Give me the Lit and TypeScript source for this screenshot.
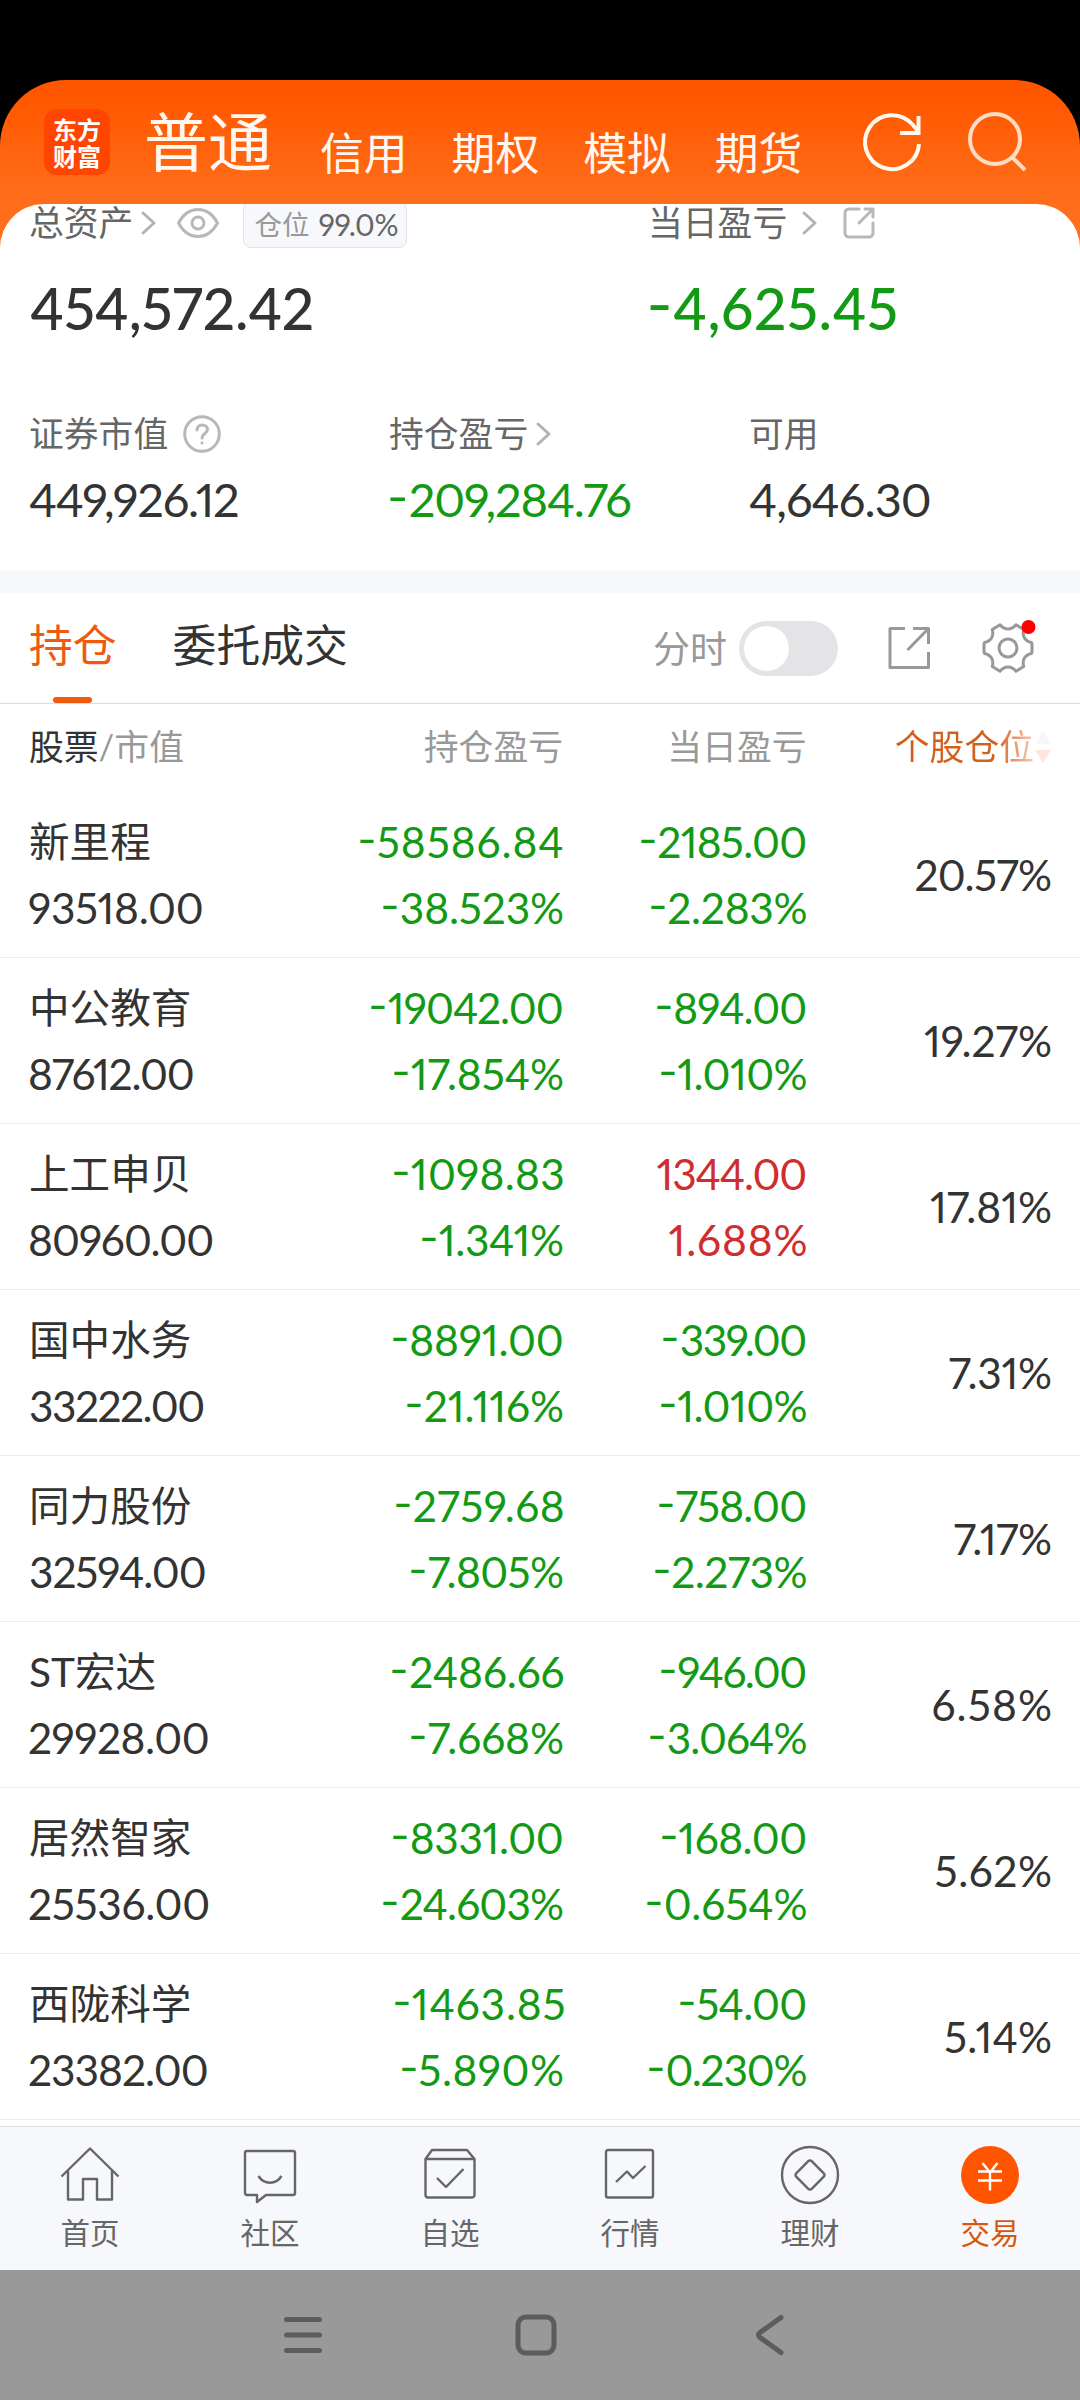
import { LitElement, html, css, svg, nothing } from "lit";
import { customElement, property, query } from "lit/decorators.js";
import { classMap } from "lit/directives/class-map.js";

const ctx = document.createElement("canvas").getContext("2d")!;

/* A figure whose ink is tracked to fill exactly `w` pixels. */
@customElement("num-text")
export class NumText extends LitElement {
  @property() value = "";
  @property({ type: Number }) w = 100;
  @property({ type: Number }) size = 42.5;
  @property({ type: Number }) weight = 400;
  @query(".n") private box!: HTMLElement;
  @query(".d") private figures!: HTMLElement;
  static styles = css`
    :host { display: block; white-space: nowrap; }
    .n { display: inline-block; font-kerning: normal; font-variant-numeric: proportional-nums; }
    .m { display: inline-block; width: 0.42em; letter-spacing: 0; text-align: left; transform: translate(-0.05em, -0.09em) scaleX(1.25); transform-origin: 0 50%; }
  `;
  protected updated() {
    const box = this.box;
    box.style.fontSize = `${this.size}px`;
    box.style.fontWeight = `${this.weight}`;
    box.style.letterSpacing = "0";
    const minus = this.value.startsWith("-");
    const digits = minus ? this.value.slice(1) : this.value;
    const natural = this.figures.getBoundingClientRect().width;
    ctx.font = `${this.weight} ${this.size}px Lato`;
    const left = digits[0] === "1" ? 2 : -ctx.measureText(digits[0]).actualBoundingBoxLeft;
    const tail = ctx.measureText(digits[digits.length - 1]);
    const right = tail.width - tail.actualBoundingBoxRight;
    const lead = minus ? 0.42 * this.size + left : 0;
    const ls = (this.w - lead - (natural - left - right)) / (digits.length - 1);
    box.style.letterSpacing = `${ls}px`;
    box.style.marginLeft = `${minus ? 0 : -left}px`;
    box.style.marginRight = `${-ls - right}px`;
  }
  render() {
    const minus = this.value.startsWith("-");
    return html`<span class="n">${minus ? html`<span class="m">-</span>` : nothing}<span class="d">${minus ? this.value.slice(1) : this.value}</span></span>`;
  }
}

type Fig = [text: string, width: number];
interface Holding { name: string; value: Fig; pl: Fig; plPct: Fig; day: Fig; dayPct: Fig; share: Fig; }

const HOLDINGS: Holding[] = [
  { name: "新里程", value: ["93518.00", 173], pl: ["-58586.84", 204], plPct: ["-38.523%", 181], day: ["-2185.00", 167], dayPct: ["-2.283%", 157], share: ["20.57%", 134.5] },
  { name: "中公教育", value: ["87612.00", 164], pl: ["-19042.00", 193], plPct: ["-17.854%", 170], day: ["-894.00", 151], dayPct: ["-1.010%", 147], share: ["19.27%", 125] },
  { name: "上工申贝", value: ["80960.00", 183.5], pl: ["-1098.83", 170], plPct: ["-1.341%", 142], day: ["1344.00", 148], dayPct: ["1.688%", 136], share: ["17.81%", 119] },
  { name: "国中水务", value: ["33222.00", 174.5], pl: ["-8891.00", 171.5], plPct: ["-21.116%", 157], day: ["-339.00", 144.5], dayPct: ["-1.010%", 147], share: ["7.31%", 100.5] },
  { name: "同力股份", value: ["32594.00", 176], pl: ["-2759.68", 168], plPct: ["-7.805%", 153], day: ["-758.00", 149], dayPct: ["-2.273%", 153], share: ["7.17%", 95.5] },
  { name: "ST宏达", value: ["29928.00", 179], pl: ["-2486.66", 171.5], plPct: ["-7.668%", 153], day: ["-946.00", 147], dayPct: ["-3.064%", 157.5], share: ["6.58%", 117.5] },
  { name: "居然智家", value: ["25536.00", 179.5], pl: ["-8331.00", 171], plPct: ["-24.603%", 181], day: ["-168.00", 146], dayPct: ["-0.654%", 160.5], share: ["5.62%", 114.5] },
  { name: "西陇科学", value: ["23382.00", 178], pl: ["-1463.85", 169], plPct: ["-5.890%", 162.5], day: ["-54.00", 128], dayPct: ["-0.230%", 159], share: ["5.14%", 105] },
];

const NAV = [
  { label: "首页", icon: svg`<path d="M1.500 31.500 30 3.500 58.500 31.500M8 26V54.500H23V34H37V54.500H52V26"/>` },
  { label: "社区", icon: svg`<path d="M7 6H53a2 2 0 0 1 2 2V48a2 2 0 0 1-2 2H26L17 57V50H7a2 2 0 0 1-2-2V8a2 2 0 0 1 2-2ZM18.500 31C24 40 36 40 41.500 31"/>` },
  { label: "自选", icon: svg`<path d="M5.500 14 12 5H47L54.500 14V50a2.500 2.500 0 0 1-2.500 2.500H8A2.500 2.500 0 0 1 5.500 50ZM6 14H54M17 33 26 42 43.500 24"/>` },
  { label: "行情", icon: svg`<rect x="6" y="5" width="47" height="47.500" rx="2"/><path d="M16 37 27 26.500 33 33 45.500 21"/>` },
  { label: "理财", icon: svg`<circle cx="30" cy="30" r="28"/><path d="M28.300 16.200a2.400 2.400 0 0 1 3.400 0L43.800 28.300a2.400 2.400 0 0 1 0 3.400L31.700 43.800a2.400 2.400 0 0 1-3.400 0L16.200 31.700a2.400 2.400 0 0 1 0-3.400Z"/>` },
  { label: "交易", icon: svg`<circle cx="30" cy="30" r="29" fill="#ff5500" stroke="none"/><path stroke="#fff" d="M22.500 18 30 27.500 37.500 18M30 27.500V45.500M18 26.500H42M18 35.500H42"/>` },
];

/* Six-toothed settings cog in a 52px box. */
const COG = "M18 2.700C22.500 8.300 29.500 8.300 34 2.700L41.700 7.500C40 13.500 42.500 19 49.500 20.500Q50 21 50 22V30Q50 31 49.500 31.500C42.500 33 40 38.500 41.700 44.500L34 49.300C29.500 43.700 22.500 43.700 18 49.300L10.300 44.500C12 38.500 9.500 33 2.500 31.500Q2 31 2 30V22Q2 21 2.500 20.500C9.500 19 12 13.500 10.300 7.500Z";

const chevron = html`<svg class="chev" width="16" height="24" viewBox="0 0 16 24"><path d="M2 2 13 12 2 22"/></svg>`;
const fig = (f: Fig) => html`<num-text .value=${f[0]} .w=${f[1]}></num-text>`;

@customElement("app-root")
export class AppRoot extends LitElement {
  static styles = css`
    :host {
      display: flex; flex-direction: column; width: 1080px; height: 2400px;
      background: #000; overflow: hidden; color: #333;
      font-family: Lato, "Noto Sans CJK SC", sans-serif; line-height: 1;
    }
    * { box-sizing: border-box; }
    svg { display: block; flex: none; fill: none; overflow: visible; }
    .status { height: 80px; flex: none; }
    .app {
      flex: 1; display: flex; flex-direction: column; overflow: hidden;
      border-radius: 66px 66px 0 0;
      background: linear-gradient(#ff5500 0, #ff5800 20px, #ff6d1a 115px, #ff7022 180px);
    }
    .top { height: 124px; flex: none; display: flex; color: #fff8f0; padding-left: 44px; }
    .logo {
      width: 66px; height: 66px; margin-top: 29px; border-radius: 13px; background: #ff4500;
      display: flex; flex-direction: column; align-items: center; justify-content: center;
      font-size: 24px; font-weight: 700; line-height: 27px; color: #fff; padding-bottom: 1px;
      font-family: "Noto Sans CJK SC", sans-serif;
    }
    .modes {
      display: flex; align-items: flex-end; gap: 44px; margin-left: 34px; height: 93px;
      font-family: "Noto Sans CJK SC", sans-serif; font-size: 43.800px; line-height: 44px; white-space: nowrap;
    }
    .modes .on { font-size: 64px; line-height: 64px; margin-right: 4px; padding-bottom: 3px; }
    .refresh { margin: 31px 0 0 60px; }
    .search { margin: 29px 0 0 42px; }
    .card { flex: 1; background: #fff; border-radius: 44px 44px 0 0; overflow: hidden; display: flex; flex-direction: column; }
    .lab { display: flex; align-items: center; height: 38px; font-size: 34.800px; color: #666; white-space: nowrap; }
    .chev { stroke: #b3b3b3; stroke-width: 3; stroke-linecap: round; stroke-linejoin: round; margin-left: 8px; }
    .far .chev { margin-left: 15px; }
    .grey { stroke: #b8b8b8; stroke-width: 3; stroke-linecap: round; stroke-linejoin: round; }
    .eye { margin-left: 20px; }
    .out { margin-left: 25px; }
    .ask { margin-left: 15px; }
    .tag {
      display: flex; align-items: center; gap: 10px; height: 47px; width: 164px; flex: none; padding-left: 10px;
      margin: 3px 0 0 24px; border: 1px solid #e2e2e5; border-radius: 8px; background: #f7f8fb;
      font-size: 27.500px; color: #999;
    }
    .tag num-text { color: #666; }
    .big { display: grid; grid-template-columns: 619px 1fr; padding: 0 0 0 29px; height: 211px; flex: none; align-content: start; }
    .amount { height: 60px; display: flex; align-items: center; margin-top: 36px; padding-left: 1px; }
    .small { display: grid; grid-template-columns: 360px 360px 1fr; padding-left: 29px; height: 156px; flex: none; align-content: start; }
    .small .amount { height: 50px; margin-top: 21px; padding-left: 0; }
    .g { color: #139a14; }
    .r { color: #d02e2e; }
    .band { height: 22px; flex: none; background: #f7f8fb; }
    .tabs { height: 111px; flex: none; display: flex; align-items: center; padding-left: 29px; border-bottom: 1px solid #dcdcdc; font-size: 43.800px; white-space: nowrap; }
    .tab { height: 110px; display: flex; flex-direction: column; align-items: center; justify-content: space-between; padding-top: 31px; }
    .tab.on { color: #ec5b10; margin-right: 56px; }
    .tab.on::after { content: ""; width: 39px; height: 6px; border-radius: 3px; background: #f05a0e; }
    .fs { margin-left: auto; font-size: 37px; color: #999; }
    .switch { width: 99px; height: 55px; border-radius: 28px; background: #e4e4e6; padding: 5px; margin-left: 12px; }
    .knob { width: 45px; height: 45px; border-radius: 50%; background: #fff; }
    .tool { stroke: #999; stroke-width: 3; stroke-linejoin: round; }
    .open { margin-left: 49px; }
    .cog { margin: 0 46px 0 51px; }
    .cols, .row { display: grid; grid-template-columns: 300px 234px 243.500px 1fr; padding: 0 29px; align-items: center; flex: none; }
    .cols { height: 88px; padding-bottom: 1px; font-size: 34.800px; color: #999; white-space: nowrap; }
    .cols b { font-weight: 400; color: #333; }
    .end { text-align: right; }
    .sort { display: flex; align-items: center; justify-content: flex-end; gap: 1px; }
    .sort span { background: linear-gradient(90deg, #d2601c 0, #d2601c 72%, #f6cdb6 100%); background-clip: text; -webkit-background-clip: text; color: transparent; }
    .row { height: 166px; border-bottom: 1px solid #ebebeb; }
    .cell { display: flex; flex-direction: column; }
    .cell > * { height: 66px; line-height: 66px; }
    .cell .name { font-size: 40.600px; }
    .cell .name + num-text { padding-left: 1px; }
    .cell.end { align-items: flex-end; }
    .rest { flex: 1; }
    .nav { height: 144px; flex: none; display: grid; grid-template-columns: repeat(6, 1fr); background: #f7f8fb; border-top: 1px solid #dedee0; }
    .item { display: flex; flex-direction: column; align-items: center; padding-top: 18px; font-size: 29.500px; color: #666; }
    .item svg { stroke: #666; stroke-width: 2.400; stroke-linejoin: round; }
    .item span { margin-top: 13px; line-height: 30px; }
    .item.on { color: #d9560f; }
    .sys { height: 130px; flex: none; background: #999; display: flex; align-items: center; padding-left: 281px; }
    .sys svg { stroke: #5c5c5c; stroke-width: 5; stroke-linecap: round; stroke-linejoin: round; }
    .home { margin: 0 193px 0 189px; }
  `;

  private tone(f: Fig) {
    const down = f[0].startsWith("-");
    return classMap({ cell: true, end: true, g: down, r: !down });
  }

  render() {
    return html`
      <div class="status"></div>
      <div class="app">
        <header class="top">
          <div class="logo"><span>东方</span><span>财富</span></div>
          <div class="modes"><span class="on">普通</span><span>信用</span><span>期权</span><span>模拟</span><span>期货</span></div>
          <svg class="refresh" width="60" height="62" viewBox="0 0 60 62" stroke="#fff8ee" stroke-width="4">
            <path d="M57 33A27 27 0 1 1 50.500 13.500L56 20"/><path d="M56.500 5V22H38"/>
          </svg>
          <svg class="search" width="64" height="64" viewBox="0 0 64 64" stroke="#ffdcc4" stroke-width="4">
            <circle cx="31" cy="30" r="25"/><path d="M48 48 61 61"/>
          </svg>
        </header>
        <main class="card">
          <section class="big">
            <div>
              <div class="lab">总资产${chevron}
                <svg class="grey eye" width="42" height="30" viewBox="0 0 42 30"><path d="M1.500 15C11-3 31-3 40.500 15 31 33 11 33 1.500 15Z"/><circle cx="21" cy="15" r="6"/></svg>
                <div class="tag"><span>仓位</span><num-text value="99.0%" size="30" w="78"></num-text></div>
              </div>
              <div class="amount"><num-text value="454,572.42" size="57" weight="500" w="282"></num-text></div>
            </div>
            <div>
              <div class="lab far">当日盈亏${chevron}
                <svg class="grey out" width="32" height="32" viewBox="0 0 32 32"><path d="M16 2H6A4 4 0 0 0 2 6V26a4 4 0 0 0 4 4H26a4 4 0 0 0 4-4V16M22 2H30V10M30 2 16 16"/></svg>
              </div>
              <div class="amount g"><num-text value="-4,625.45" size="57" weight="500" w="246"></num-text></div>
            </div>
          </section>
          <section class="small">
            <div>
              <div class="lab">证券市值
                <svg class="grey ask" width="38" height="38" viewBox="0 0 38 38"><circle cx="19" cy="19" r="17.300"/><path d="M14 15C14 8 24.500 8.500 24.500 14.500 24.500 18.500 19 18.500 19 23M19 27.800V28"/></svg>
              </div>
              <div class="amount"><num-text value="449,926.12" size="47" w="208.500"></num-text></div>
            </div>
            <div>
              <div class="lab">持仓盈亏${chevron}</div>
              <div class="amount g"><num-text value="-209,284.76" size="47" w="241.500"></num-text></div>
            </div>
            <div>
              <div class="lab">可用</div>
              <div class="amount"><num-text value="4,646.30" size="47" w="181.500"></num-text></div>
            </div>
          </section>
          <div class="band"></div>
          <div class="tabs">
            <div class="tab on">持仓</div><div class="tab">委托成交</div>
            <span class="fs">分时</span>
            <div class="switch"><div class="knob"></div></div>
            <svg class="tool open" width="44" height="44" viewBox="0 0 44 44"><path d="M18 2.500H3V41.500H41.500V26M26 2.500H41.500V18M41.500 2.500 20.500 24"/></svg>
            <svg class="tool cog" width="52" height="52" viewBox="0 0 52 52"><path d=${COG}/><circle cx="26" cy="26" r="9"/><circle cx="46.500" cy="5" r="7" fill="#f00" stroke="none"/></svg>
          </div>
          <div class="cols">
            <div><b>股票</b>/市值</div>
            <div class="end">持仓盈亏</div>
            <div class="end">当日盈亏</div>
            <div class="sort"><span>个股仓位</span>
              <svg width="16" height="32" viewBox="0 0 16 32"><path d="M8 0 16 13H0Z" fill="#f7f7f9"/><path d="M0 19H16L8 32Z" fill="#fde6dc"/></svg>
            </div>
          </div>
          ${HOLDINGS.map((h) => html`
            <div class="row">
              <div class="cell"><span class="name">${h.name}</span>${fig(h.value)}</div>
              <div class=${this.tone(h.pl)}>${fig(h.pl)}${fig(h.plPct)}</div>
              <div class=${this.tone(h.day)}>${fig(h.day)}${fig(h.dayPct)}</div>
              <div class="cell end">${fig(h.share)}</div>
            </div>`)}
          <div class="rest"></div>
          <nav class="nav">
            ${NAV.map((n, i) => html`<div class=${classMap({ item: true, on: i === 5 })}>
              <svg width="60" height="60" viewBox="0 0 60 60">${n.icon}</svg><span>${n.label}</span></div>`)}
          </nav>
          <div class="sys">
            <svg width="44" height="44" viewBox="0 0 44 44"><path d="M5.500 6.500H38.500M5.500 22H38.500M5.500 37.500H38.500"/></svg>
            <svg class="home" width="44" height="44" viewBox="0 0 44 44"><rect x="4" y="4" width="36" height="36" rx="8"/></svg>
            <svg width="30" height="44" viewBox="0 0 30 44"><path d="M30 4.500 9 19.500Q6 22 9 24.500L30 39.500"/></svg>
          </div>
        </main>
      </div>`;
  }
}
